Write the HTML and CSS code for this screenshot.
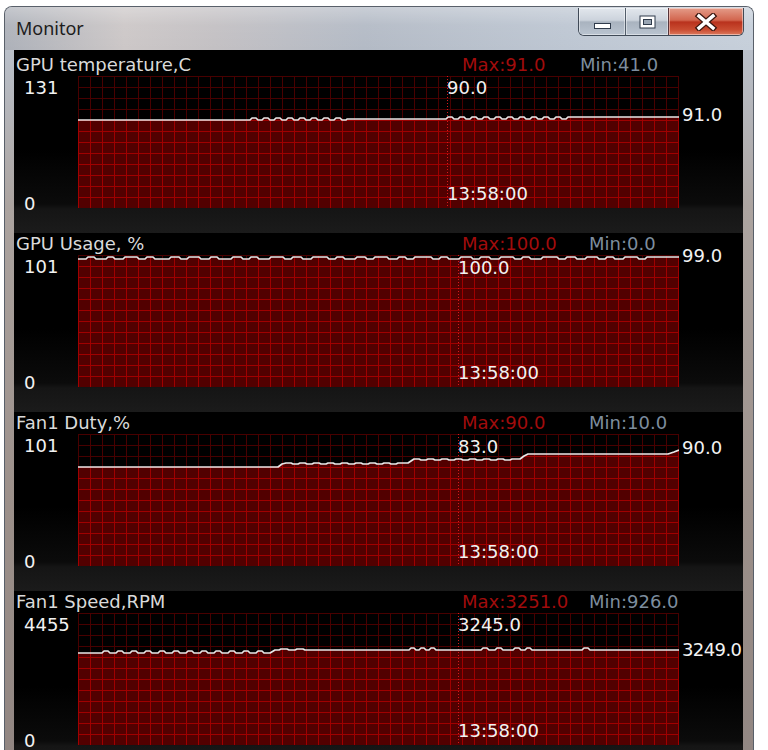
FILE: index.html
```html
<!DOCTYPE html>
<html>
<head>
<meta charset="utf-8">
<title>Monitor</title>
<link rel="stylesheet" href="styles.css">
</head>
<body>
<div class="window">
  <div class="titlebar">
    <span class="title">Monitor</span>
    <div class="caption">
      <div class="cap cap-min">
        <svg width="19" height="8" viewBox="0 0 19 8"><rect x="1.5" y="1.5" width="16" height="5" fill="#fff" stroke="#2f3b4b"/></svg>
      </div>
      <div class="cap cap-max">
        <svg width="17" height="14" viewBox="0 0 17 14"><rect x="0.5" y="0.5" width="16" height="13" fill="#2f3b4b"/><rect x="1.5" y="1.5" width="14" height="11" fill="#fff"/><rect x="4.5" y="4.5" width="8" height="5" fill="#9aa6b4" stroke="#2f3b4b"/></svg>
      </div>
      <div class="cap cap-close">
        <svg width="24" height="18" viewBox="0 0 24 18"><path d="M5 3L19 15M19 3L5 15" stroke="#3c1710" stroke-width="6" stroke-linecap="square"/><path d="M5 3L19 15M19 3L5 15" stroke="#fff" stroke-width="3.4" stroke-linecap="square"/></svg>
      </div>
    </div>
  </div>

  <div class="client">
    <section class="panel">
      <div class="panel-head narrow"><span class="name">GPU temperature,C</span><span class="max">Max:91.0</span><span class="min">Min:41.0</span></div>
      <div class="panel-body">
        <div class="axis"><span>131</span><span>0</span></div>
        <div class="graph">
          <svg class="plot" width="601" height="132" viewBox="0 0 601 132">
            <defs>
              <pattern id="a1" width="12" height="11" patternUnits="userSpaceOnUse"><rect width="12" height="11" fill="#000"/><path d="M0.5 0V11M0 0.5H12" stroke="#480000" fill="none"/></pattern>
              <pattern id="b1" width="12" height="11" patternUnits="userSpaceOnUse"><rect width="12" height="11" fill="#520000"/><path d="M0.5 0V11M0 0.5H12" stroke="#a00000" fill="none"/></pattern>
            </defs>
            <rect width="601" height="132" fill="url(#a1)"/>
            <path d="M0 44H172l2-2h4l2 2h4l2-2h4l2 2h4l2-2h4l2 2h4l2-2h4l2 2h4l2-2h4l2 2h4l2-2h4l2 2h4l2-2h4l2 2h4l2-2h4l2 2h4l1-1H368l2-2h4l2 2h4l2-2h4l2 2h4l2-2h4l2 2h4l2-2h4l2 2h4l2-2h4l2 2h4l2-2h4l2 2h4l2-2h4l2 2h4l2-2h4l2 2h4l2-2h4l2 2h4l2-2h4l2 2h4l2-2H601V132H0Z" fill="url(#b1)"/>
            <line class="cursor" x1="369.5" y1="0" x2="369.5" y2="132"/>
            <path class="trace" d="M0 44H172l2-2h4l2 2h4l2-2h4l2 2h4l2-2h4l2 2h4l2-2h4l2 2h4l2-2h4l2 2h4l2-2h4l2 2h4l2-2h4l2 2h4l2-2h4l2 2h4l1-1H368l2-2h4l2 2h4l2-2h4l2 2h4l2-2h4l2 2h4l2-2h4l2 2h4l2-2h4l2 2h4l2-2h4l2 2h4l2-2h4l2 2h4l2-2h4l2 2h4l2-2h4l2 2h4l2-2h4l2 2h4l2-2H601"/>
          </svg>
          <span class="tag tag-top" style="left:369px">90.0</span>
          <span class="tag tag-bottom" style="left:369px">13:58:00</span>
          <span class="tag tag-now" style="top:29px">91.0</span>
        </div>
      </div>
    </section>

    <section class="panel">
      <div class="panel-head"><span class="name">GPU Usage, %</span><span class="max">Max:100.0</span><span class="min">Min:0.0</span></div>
      <div class="panel-body">
        <div class="axis"><span>101</span><span>0</span></div>
        <div class="graph">
          <svg class="plot" width="601" height="132" viewBox="0 0 601 132">
            <defs>
              <pattern id="a2" width="12" height="11" patternUnits="userSpaceOnUse"><rect width="12" height="11" fill="#000"/><path d="M0.5 0V11M0 0.5H12" stroke="#480000" fill="none"/></pattern>
              <pattern id="b2" width="12" height="11" patternUnits="userSpaceOnUse"><rect width="12" height="11" fill="#520000"/><path d="M0.5 0V11M0 0.5H12" stroke="#a00000" fill="none"/></pattern>
            </defs>
            <rect width="601" height="132" fill="url(#a2)"/>
            <path d="M0 4h8l2-2h6l2 2h10l2-2h5l2 2h8l2-2h12l2 2h6l2-2h6l2 2h14l2-2h8l2 2h6l2-2h10l2 2h8l2-2h6l2 2h12l2-2h8l2 2h6l2-2h6l2 2h10l2-2h12l2 2h6l2-2h8l2 2h8l2-2h14l2 2h6l2-2h6l2 2h10l2-2h8l2 2h6l2-2h12l2 2h8l2-2h6l2 2h6l2-2h16l2 2h6l2-2h6l2 2h10l2-2h10l2 2h6l2-2h8l2 2h8l2-2h12l2 2h6l2-2h6l2 2h10l2-2h14l2 2h6l2-2h8l2 2h8l2-2h10l2 2h6l2-2h6l2 2h8l2-2h12l2 2h6l2-2H601V132H0Z" fill="url(#b2)"/>
            <line class="cursor" x1="380.5" y1="0" x2="380.5" y2="132"/>
            <path class="trace" d="M0 4h8l2-2h6l2 2h10l2-2h5l2 2h8l2-2h12l2 2h6l2-2h6l2 2h14l2-2h8l2 2h6l2-2h10l2 2h8l2-2h6l2 2h12l2-2h8l2 2h6l2-2h6l2 2h10l2-2h12l2 2h6l2-2h8l2 2h8l2-2h14l2 2h6l2-2h6l2 2h10l2-2h8l2 2h6l2-2h12l2 2h8l2-2h6l2 2h6l2-2h16l2 2h6l2-2h6l2 2h10l2-2h10l2 2h6l2-2h8l2 2h8l2-2h12l2 2h6l2-2h6l2 2h10l2-2h14l2 2h6l2-2h8l2 2h8l2-2h10l2 2h6l2-2h6l2 2h8l2-2h12l2 2h6l2-2H601"/>
          </svg>
          <span class="tag tag-top" style="left:380px;top:3px">100.0</span>
          <span class="tag tag-bottom" style="left:380px">13:58:00</span>
          <span class="tag tag-now" style="top:-9px">99.0</span>
        </div>
      </div>
    </section>

    <section class="panel">
      <div class="panel-head"><span class="name">Fan1 Duty,%</span><span class="max">Max:90.0</span><span class="min">Min:10.0</span></div>
      <div class="panel-body">
        <div class="axis"><span>101</span><span>0</span></div>
        <div class="graph">
          <svg class="plot" width="601" height="132" viewBox="0 0 601 132">
            <defs>
              <pattern id="a3" width="12" height="11" patternUnits="userSpaceOnUse"><rect width="12" height="11" fill="#000"/><path d="M0.5 0V11M0 0.5H12" stroke="#480000" fill="none"/></pattern>
              <pattern id="b3" width="12" height="11" patternUnits="userSpaceOnUse"><rect width="12" height="11" fill="#520000"/><path d="M0.5 0V11M0 0.5H12" stroke="#a00000" fill="none"/></pattern>
            </defs>
            <rect width="601" height="132" fill="url(#a3)"/>
            <path d="M0 33H200l4-3l4-1h5l2 1h5l2-1h5l2 1h5l2-1h5l2 1h5l2-1h5l2 1h5l2-1h5l2 1h5l2-1h5l2 1h5l2-1h5l2 1h5l2-1h5l2 1h5l2-1H330l6-4h5l2 1h5l2-1h5l2 1h5l2-1h5l2 1h5l2-1h5l2 1h5l2-1h5l2 1h5l2-1h5l2 1h5l2-1h5l2 1h5l2-1H442l4-3l4-2H590l6-2l5-2V132H0Z" fill="url(#b3)"/>
            <line class="cursor" x1="380.5" y1="0" x2="380.5" y2="132"/>
            <path class="trace" d="M0 33H200l4-3l4-1h5l2 1h5l2-1h5l2 1h5l2-1h5l2 1h5l2-1h5l2 1h5l2-1h5l2 1h5l2-1h5l2 1h5l2-1h5l2 1h5l2-1h5l2 1h5l2-1H330l6-4h5l2 1h5l2-1h5l2 1h5l2-1h5l2 1h5l2-1h5l2 1h5l2-1h5l2 1h5l2-1h5l2 1h5l2-1h5l2 1h5l2-1H442l4-3l4-2H590l6-2l5-2"/>
          </svg>
          <span class="tag tag-top" style="left:380px;top:3px">83.0</span>
          <span class="tag tag-bottom" style="left:380px">13:58:00</span>
          <span class="tag tag-now" style="top:4px">90.0</span>
        </div>
      </div>
    </section>

    <section class="panel">
      <div class="panel-head"><span class="name">Fan1 Speed,RPM</span><span class="max">Max:3251.0</span><span class="min">Min:926.0</span></div>
      <div class="panel-body">
        <div class="axis"><span>4455</span><span>0</span></div>
        <div class="graph">
          <svg class="plot" width="601" height="132" viewBox="0 0 601 132">
            <defs>
              <pattern id="a4" width="12" height="11" patternUnits="userSpaceOnUse"><rect width="12" height="11" fill="#000"/><path d="M0.5 0V11M0 0.5H12" stroke="#480000" fill="none"/></pattern>
              <pattern id="b4" width="12" height="11" patternUnits="userSpaceOnUse"><rect width="12" height="11" fill="#520000"/><path d="M0.5 0V11M0 0.5H12" stroke="#a00000" fill="none"/></pattern>
            </defs>
            <rect width="601" height="132" fill="url(#a4)"/>
            <path d="M0 40H24l2-2h4l2 2h6l2-2h4l2 2h6l2-2h4l2 2h6l2-2h4l2 2h6l2-2h4l2 2h6l2-2h4l2 2h6l2-2h4l2 2h6l2-2h4l2 2h6l2-2h4l2 2h6l2-2h4l2 2h6l2-2h4l2 2h6l2-2h4l2 2h6l5-3h4l2-1h6l2 1h6l2-1h6l2 1h4H331l2-2h3l2 2h3l2-2h3l2 2h3l2-2h3l2 2H403l2-2h4l2 2h6l2-2h4l2 2h10l2-2h4l2 2h4l2-2h3l2 2H504l2-2h4l2 2H601V132H0Z" fill="url(#b4)"/>
            <line class="cursor" x1="380.5" y1="0" x2="380.5" y2="132"/>
            <path class="trace" d="M0 40H24l2-2h4l2 2h6l2-2h4l2 2h6l2-2h4l2 2h6l2-2h4l2 2h6l2-2h4l2 2h6l2-2h4l2 2h6l2-2h4l2 2h6l2-2h4l2 2h6l2-2h4l2 2h6l2-2h4l2 2h6l2-2h4l2 2h6l2-2h4l2 2h6l5-3h4l2-1h6l2 1h6l2-1h6l2 1h4H331l2-2h3l2 2h3l2-2h3l2 2h3l2-2h3l2 2H403l2-2h4l2 2h6l2-2h4l2 2h10l2-2h4l2 2h4l2-2h3l2 2H504l2-2h4l2 2H601"/>
          </svg>
          <span class="tag tag-top" style="left:380px">3245.0</span>
          <span class="tag tag-bottom" style="left:380px">13:58:00</span>
          <span class="tag tag-now tight" style="top:27px">3249.0</span>
        </div>
      </div>
    </section>
  </div>
</div>
</body>
</html>
```

FILE: styles.css
```css
html, body {
  margin: 0;
  padding: 0;
  height: 100%;
  overflow: hidden;
  background: #ffffff;
}

.window {
  margin: 6px 0 0 4px;
  width: 750px;
  height: 760px;
  box-sizing: border-box;
  border: 1px solid #59606a;
  border-bottom: none;
  border-radius: 8px 8px 0 0;
  background: linear-gradient(to bottom, #c2c8d1 0, #b9bfc8 50px, #aca4a0 200px, #9c908a 500px, #918682 100%);
  display: flex;
  flex-direction: column;
  overflow: hidden;
}

.titlebar {
  height: 43px;
  display: flex;
  align-items: flex-start;
  padding-left: 11px;
  background:
    linear-gradient(to bottom, rgba(255,255,255,0.3) 0, rgba(255,255,255,0.06) 18px, rgba(255,255,255,0) 43px),
    linear-gradient(to right, #adb1b9 0%, #ccc7c7 16%, #c3c0c3 28%, #b3bac5 48%, #bdc6d2 75%, #c6cfda 100%);
  flex: none;
}

.title {
  font-family: "Noto Sans", "Open Sans", sans-serif;
  font-size: 18px;
  line-height: 42px;
  color: #1d1d1d;
}

.caption {
  margin-left: auto;
  margin-right: 9px;
  margin-top: 1px;
  display: flex;
  height: 27px;
  border: 1px solid #404a57;
  border-top: none;
  border-radius: 0 0 6px 6px;
  overflow: hidden;
}

.cap {
  height: 100%;
  display: flex;
  align-items: center;
  justify-content: center;
  box-sizing: border-box;
  box-shadow: inset 0 0 0 1px rgba(255,255,255,0.45);
}

.cap svg {
  display: block;
}

.cap-min {
  width: 46px;
  background: linear-gradient(to bottom, #e2e7ed 0%, #ccd3dc 45%, #a9b3bf 52%, #bac4d0 100%);
}

.cap-min svg {
  margin-top: 9px;
}

.cap-max {
  width: 43px;
  border-left: 1px solid #525d6a;
  background: linear-gradient(to bottom, #e2e7ed 0%, #ccd3dc 45%, #a9b3bf 52%, #bac4d0 100%);
}

.cap-close {
  width: 75px;
  border-left: 1px solid #56343a;
  background: linear-gradient(to bottom, #e49c89 0%, #d2654e 45%, #b9321d 52%, #c94c31 80%, #dc7a5e 100%);
}

.client {
  flex: 1;
  margin: 0 10px 0 9px;
  padding-top: 4px;
  background: #000;
  overflow: hidden;
}

.panel {
  height: 179px;
  font-family: "DejaVu Sans", Verdana, sans-serif;
  font-size: 18px;
  background: linear-gradient(to bottom, #000 0, #000 95px, #0b0b0b 150px, #151515 155px, #1b1b1b 179px);
}

.panel-head {
  display: grid;
  grid-template-columns: 446px 127px 1fr;
  padding-left: 2px;
  height: 22px;
  line-height: 22px;
  white-space: nowrap;
  background: #000;
}

.panel-head.narrow {
  grid-template-columns: 446px 118px 1fr;
}

.name {
  color: #dadada;
}

.max {
  color: #a10c0c;
}

.min {
  color: #7d8d9e;
}

.panel-body {
  display: grid;
  grid-template-columns: 64px 601px;
  align-items: start;
}

.axis {
  height: 138px;
  box-sizing: border-box;
  padding: 2px 0 0 10px;
  display: flex;
  flex-direction: column;
  justify-content: space-between;
  line-height: 20px;
  color: #f2f2f2;
}

.graph {
  position: relative;
  height: 132px;
}

.plot {
  display: block;
}

.cursor {
  stroke: #d81a1a;
  stroke-width: 1;
  stroke-dasharray: 1 2;
}

.trace {
  fill: none;
  stroke: #e8e8e8;
  stroke-width: 1.7;
  stroke-linejoin: round;
}

.tag {
  position: absolute;
  line-height: 20px;
  color: #f2f2f2;
  white-space: nowrap;
}

.tag-top {
  top: 2px;
}

.tag-bottom {
  top: 108px;
}

.tag-now {
  left: 604px;
}

.tag-now.tight {
  letter-spacing: -0.6px;
}
```
